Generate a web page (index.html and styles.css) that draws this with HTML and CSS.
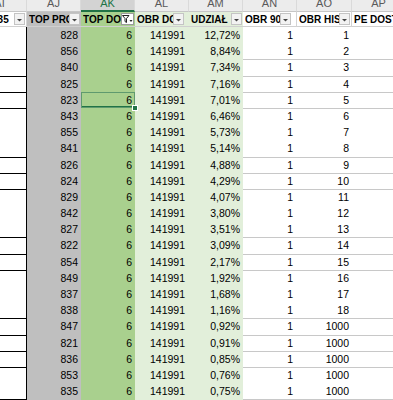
FILE: index.html
```html
<!DOCTYPE html>
<html lang="pl">
<head>
    <meta charset="UTF-8">
    <meta name="viewport" content="width=device-width, initial-scale=1.0">
    <title>Arkusz</title>
    <link rel="stylesheet" href="styles.css">
</head>
<body>
<div class="sheet">
    <div class="letters">
        <div class="l">AI</div><div class="l">AJ</div><div class="l sel">AK</div><div class="l">AL</div>
        <div class="l">AM</div><div class="l">AN</div><div class="l">AO</div><div class="l">AP</div>
    </div>
    <div class="head">
        <div class="h ai"><span>ZAP 35</span><i class="btn"><svg width="9" height="9" viewBox="0 0 9 9"><path d="M2 4h5l-2.5 2.5z" fill="#444"/></svg></i></div>
        <div class="h aj"><span>TOP PROD</span><i class="btn"><svg width="9" height="9" viewBox="0 0 9 9"><path d="M2 4h5l-2.5 2.5z" fill="#444"/></svg></i></div>
        <div class="h ak"><span>TOP DOST</span><i class="btn on"><svg width="11" height="11" viewBox="0 0 11 11"><path d="M0.5 1.5h6.5l-2.5 3v4l-1.5 -1v-3z" fill="none" stroke="#222" stroke-width="1"/><path d="M7.5 6h3l-1.5 2z" fill="#222"/></svg></i></div>
        <div class="h al"><span>OBR DOST</span><i class="btn"><svg width="9" height="9" viewBox="0 0 9 9"><path d="M2 4h5l-2.5 2.5z" fill="#444"/></svg></i></div>
        <div class="h am"><span>UDZIAŁ</span><i class="btn"><svg width="9" height="9" viewBox="0 0 9 9"><path d="M2 4h5l-2.5 2.5z" fill="#444"/></svg></i></div>
        <div class="h an"><span>OBR 90</span><i class="btn"><svg width="9" height="9" viewBox="0 0 9 9"><path d="M2 4h5l-2.5 2.5z" fill="#444"/></svg></i></div>
        <div class="h ao"><span>OBR HIST</span><i class="btn"><svg width="9" height="9" viewBox="0 0 9 9"><path d="M2 4h5l-2.5 2.5z" fill="#444"/></svg></i></div>
        <div class="h ap"><span>PE DOSTAWCY</span></div>
    </div>

    <div class="row"><div class="c ai"></div><div class="c aj">828</div><div class="c ak">6</div><div class="c al">141991</div><div class="c am">12,72%</div><div class="c an">1</div><div class="c ao">1</div><div class="c ap"></div></div>
    <div class="row"><div class="c ai"></div><div class="c aj">856</div><div class="c ak">6</div><div class="c al">141991</div><div class="c am">8,84%</div><div class="c an">1</div><div class="c ao">2</div><div class="c ap"></div></div>
    <div class="row line"><div class="c ai"></div><div class="c aj">840</div><div class="c ak">6</div><div class="c al">141991</div><div class="c am">7,34%</div><div class="c an">1</div><div class="c ao">3</div><div class="c ap"></div></div>
    <div class="row line"><div class="c ai"></div><div class="c aj">825</div><div class="c ak">6</div><div class="c al">141991</div><div class="c am">7,16%</div><div class="c an">1</div><div class="c ao">4</div><div class="c ap"></div></div>
    <div class="row line"><div class="c ai"></div><div class="c aj">823</div><div class="c ak active">6<b class="handle"></b></div><div class="c al">141991</div><div class="c am">7,01%</div><div class="c an">1</div><div class="c ao">5</div><div class="c ap"></div></div>
    <div class="row line"><div class="c ai"></div><div class="c aj">843</div><div class="c ak">6</div><div class="c al">141991</div><div class="c am">6,46%</div><div class="c an">1</div><div class="c ao">6</div><div class="c ap"></div></div>
    <div class="row"><div class="c ai"></div><div class="c aj">855</div><div class="c ak">6</div><div class="c al">141991</div><div class="c am">5,73%</div><div class="c an">1</div><div class="c ao">7</div><div class="c ap"></div></div>
    <div class="row"><div class="c ai"></div><div class="c aj">841</div><div class="c ak">6</div><div class="c al">141991</div><div class="c am">5,14%</div><div class="c an">1</div><div class="c ao">8</div><div class="c ap"></div></div>
    <div class="row line"><div class="c ai"></div><div class="c aj">826</div><div class="c ak">6</div><div class="c al">141991</div><div class="c am">4,88%</div><div class="c an">1</div><div class="c ao">9</div><div class="c ap"></div></div>
    <div class="row line"><div class="c ai"></div><div class="c aj">824</div><div class="c ak">6</div><div class="c al">141991</div><div class="c am">4,29%</div><div class="c an">1</div><div class="c ao">10</div><div class="c ap"></div></div>
    <div class="row line"><div class="c ai"></div><div class="c aj">829</div><div class="c ak">6</div><div class="c al">141991</div><div class="c am">4,07%</div><div class="c an">1</div><div class="c ao">11</div><div class="c ap"></div></div>
    <div class="row"><div class="c ai"></div><div class="c aj">842</div><div class="c ak">6</div><div class="c al">141991</div><div class="c am">3,80%</div><div class="c an">1</div><div class="c ao">12</div><div class="c ap"></div></div>
    <div class="row"><div class="c ai"></div><div class="c aj">827</div><div class="c ak">6</div><div class="c al">141991</div><div class="c am">3,51%</div><div class="c an">1</div><div class="c ao">13</div><div class="c ap"></div></div>
    <div class="row line"><div class="c ai"></div><div class="c aj">822</div><div class="c ak">6</div><div class="c al">141991</div><div class="c am">3,09%</div><div class="c an">1</div><div class="c ao">14</div><div class="c ap"></div></div>
    <div class="row line"><div class="c ai"></div><div class="c aj">854</div><div class="c ak">6</div><div class="c al">141991</div><div class="c am">2,17%</div><div class="c an">1</div><div class="c ao">15</div><div class="c ap"></div></div>
    <div class="row line"><div class="c ai"></div><div class="c aj">849</div><div class="c ak">6</div><div class="c al">141991</div><div class="c am">1,92%</div><div class="c an">1</div><div class="c ao">16</div><div class="c ap"></div></div>
    <div class="row"><div class="c ai"></div><div class="c aj">837</div><div class="c ak">6</div><div class="c al">141991</div><div class="c am">1,68%</div><div class="c an">1</div><div class="c ao">17</div><div class="c ap"></div></div>
    <div class="row"><div class="c ai"></div><div class="c aj">838</div><div class="c ak">6</div><div class="c al">141991</div><div class="c am">1,16%</div><div class="c an">1</div><div class="c ao">18</div><div class="c ap"></div></div>
    <div class="row line"><div class="c ai"></div><div class="c aj">847</div><div class="c ak">6</div><div class="c al">141991</div><div class="c am">0,92%</div><div class="c an">1</div><div class="c ao">1000</div><div class="c ap"></div></div>
    <div class="row line"><div class="c ai"></div><div class="c aj">821</div><div class="c ak">6</div><div class="c al">141991</div><div class="c am">0,91%</div><div class="c an">1</div><div class="c ao">1000</div><div class="c ap"></div></div>
    <div class="row line"><div class="c ai"></div><div class="c aj">836</div><div class="c ak">6</div><div class="c al">141991</div><div class="c am">0,85%</div><div class="c an">1</div><div class="c ao">1000</div><div class="c ap"></div></div>
    <div class="row line"><div class="c ai"></div><div class="c aj">853</div><div class="c ak">6</div><div class="c al">141991</div><div class="c am">0,76%</div><div class="c an">1</div><div class="c ao">1000</div><div class="c ap"></div></div>
    <div class="row"><div class="c ai"></div><div class="c aj">835</div><div class="c ak">6</div><div class="c al">141991</div><div class="c am">0,75%</div><div class="c an">1</div><div class="c ao">1000</div><div class="c ap"></div></div>
    <div class="row line"><div class="c ai"></div><div class="c aj"></div><div class="c ak"></div><div class="c al"></div><div class="c am"></div><div class="c an"></div><div class="c ao"></div><div class="c ap"></div></div>
</div>
</body>
</html>
```

FILE: styles.css
```css
body {
    margin: 0;
    overflow: hidden;
    background: #fff;
    font-family: "Liberation Sans", Arial, sans-serif;
    font-size: 10.5px;
    color: #000;
}
.sheet {
    margin: -8px 0 0 -27px;
    width: 460px;
}
.letters, .head, .row {
    display: grid;
    grid-template-columns: 54px 54px 54px 54px 54px 54px 55px 54px;
}

/* column letters */
.letters {
    height: 20px;
}
.l {
    box-sizing: border-box;
    background: #ececec;
    border-right: 1px solid #dadada;
    border-bottom: 1px solid #c6c6c6;
    color: #5a5a5a;
    font-size: 11px;
    line-height: 12px;
    text-align: center;
    padding-top: 5px;
}
.l.sel {
    background: #d3d3d3;
    color: #217346;
    border-bottom: 2px solid #217346;
}

/* filter header */
.head {
    height: 15px;
}
.h {
    box-sizing: border-box;
    display: flex;
    align-items: center;
    font-size: 10px;
    font-weight: bold;
    padding-left: 2px;
    border-bottom: 1px solid #d0d0d0;
    overflow: hidden;
    white-space: nowrap;
}
.h span {
    flex: 1;
    overflow: hidden;
}
.h.ai, .h.an, .h.ao {
    border-right: 1px solid #d4d4d4;
}
.btn {
    box-sizing: border-box;
    width: 11px;
    height: 12px;
    margin-right: 1px;
    background: #f2f2f2;
    border: 1px solid #c4c4c4;
    display: flex;
    align-items: center;
    justify-content: center;
    flex: none;
}
.btn.on {
    width: 13px;
    background: #fff;
    border-color: #9a9a9a;
}

/* data cells */
.row {
    height: 16.2px;
}
.c {
    box-sizing: border-box;
    line-height: 16.2px;
    text-align: right;
    padding-right: 3px;
    white-space: nowrap;
    overflow: hidden;
}
.ai {
    background: #fff;
}
.c.ai {
    border-right: 1px solid #000;
}
.aj { background: #bfbfbf; }
.ak { background: #a9d08e; }
.al { background: #e2efda; padding-right: 4px; }
.am { background: #e2efda; }
.an { padding-right: 4px; }
.ap { background: #fff; }

.line .c.ai {
    box-shadow: inset 0 1px 0 #000;
}
.line .an, .line .ao, .line .ap {
    box-shadow: inset 0 1px 0 #c8c8c8;
}

.c.active {
    position: relative;
    overflow: visible;
    z-index: 2;
    box-shadow: inset 0 0 0 1px #5f9a6e, inset 0 -2px 0 #217346;
}
.handle {
    position: absolute;
    right: -3px;
    bottom: -3px;
    width: 4px;
    height: 4px;
    background: #217346;
    border: 1px solid #fff;
}
```
